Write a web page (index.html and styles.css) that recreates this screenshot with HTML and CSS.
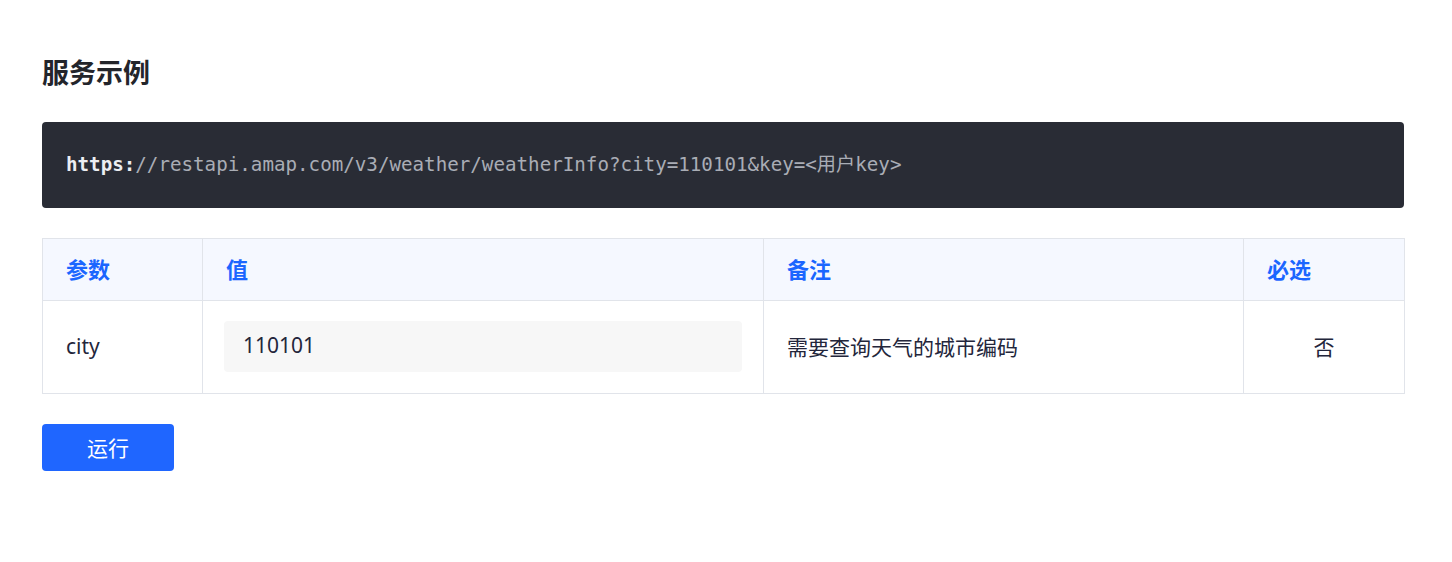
FILE: index.html
```html
<!DOCTYPE html>
<html lang="zh-CN">
<head>
<meta charset="utf-8">
<title>服务示例</title>
<link rel="stylesheet" href="styles.css">
</head>
<body>
<main class="page">
  <h2 class="title">服务示例</h2>
  <div class="code"><span class="code-proto">https:</span>//restapi.amap.com/v3/weather/weatherInfo?city=110101&amp;key=&lt;用户key&gt;</div>
  <table class="params">
    <colgroup>
      <col class="c1"><col class="c2"><col class="c3"><col class="c4">
    </colgroup>
    <thead>
      <tr><th>参数</th><th>值</th><th>备注</th><th>必选</th></tr>
    </thead>
    <tbody>
      <tr>
        <td>city</td>
        <td class="input-cell"><div class="input">110101</div></td>
        <td>需要查询天气的城市编码</td>
        <td class="center">否</td>
      </tr>
    </tbody>
  </table>
  <button class="run">运行</button>
</main>
</body>
</html>
```
FILE: styles.css
```css
html, body {
  margin: 0;
  padding: 0;
  background: #ffffff;
}
body {
  font-family: "Noto Sans", "Noto Sans CJK SC", sans-serif;
  color: #23263b;
}
.page {
  padding: 53px 48px 40px 42px;
  display: flex;
  flex-direction: column;
  align-items: flex-start;
}
.title {
  margin: 0;
  font-size: 27px;
  line-height: 39px;
  font-weight: 700;
  color: #23252b;
}
.code {
  margin-top: 30px;
  box-sizing: border-box;
  width: 1362px;
  height: 86px;
  padding: 30px 24px;
  background: #292c35;
  border-radius: 4px;
  font-family: "DejaVu Sans Mono", "Noto Sans CJK SC", monospace;
  font-size: 19.2px;
  line-height: 26px;
  color: #a9adb5;
  white-space: pre;
}
.code-proto {
  color: #eceef2;
  font-weight: 700;
}
.params {
  margin-top: 30px;
  width: 1362px;
  table-layout: fixed;
  border-collapse: collapse;
  font-size: 21px;
}
.c1 { width: 160px; }
.c2 { width: 561px; }
.c3 { width: 480px; }
.c4 { width: 161px; }
.params th,
.params td {
  border: 1px solid #e1e4ea;
  text-align: left;
  padding: 0 23px;
}
.params th {
  height: 58px;
  padding-bottom: 3px;
  background: #f5f8ff;
  color: #1b66ff;
  font-weight: 700;
  font-size: 22px;
}
.params td {
  height: 89px;
  padding-bottom: 3px;
  font-size: 21px;
}
.params td.input-cell {
  padding: 0 21px 1px;
}
.params td.center {
  text-align: center;
}
.input {
  height: 51px;
  line-height: 49px;
  padding-left: 19px;
  background: #f7f7f7;
  border-radius: 4px;
}
.run {
  margin-top: 30px;
  width: 132px;
  height: 47px;
  border: none;
  border-radius: 4px;
  background: #1f66ff;
  color: #ffffff;
  font-family: "Noto Sans", "Noto Sans CJK SC", sans-serif;
  font-size: 21px;
  padding: 0 0 2px;
}
```
